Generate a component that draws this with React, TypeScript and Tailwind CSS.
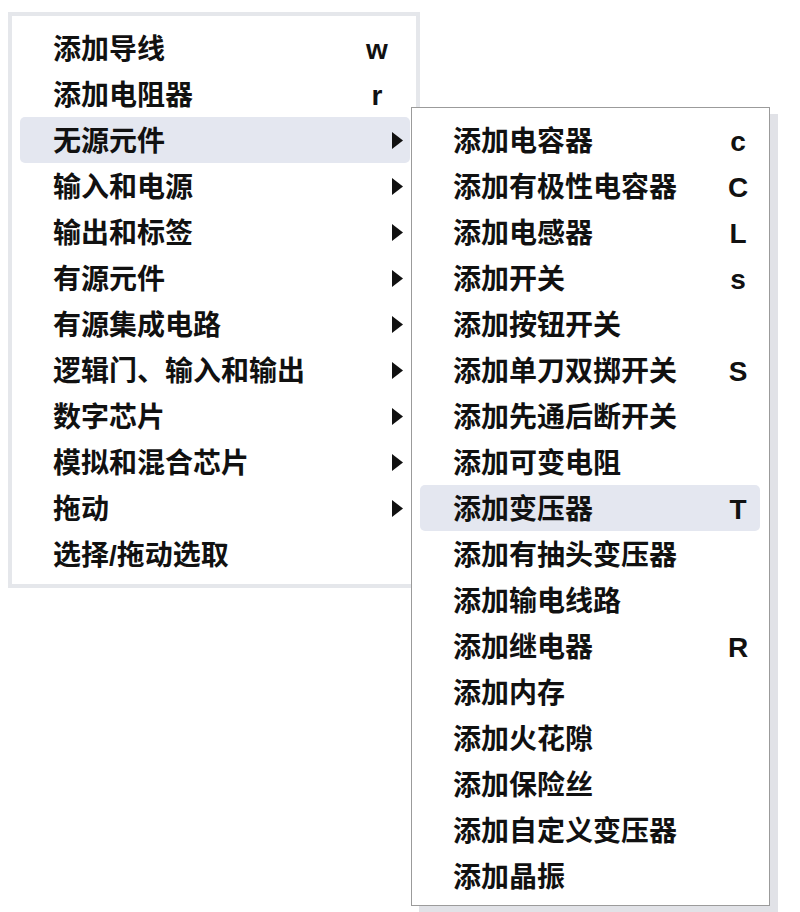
import React from 'react';

type Item = { label: string; key?: string; sub?: boolean; active?: boolean };

const mainItems: Item[] = [
  { label: '添加导线', key: 'w' },
  { label: '添加电阻器', key: 'r' },
  { label: '无源元件', sub: true, active: true },
  { label: '输入和电源', sub: true },
  { label: '输出和标签', sub: true },
  { label: '有源元件', sub: true },
  { label: '有源集成电路', sub: true },
  { label: '逻辑门、输入和输出', sub: true },
  { label: '数字芯片', sub: true },
  { label: '模拟和混合芯片', sub: true },
  { label: '拖动', sub: true },
  { label: '选择/拖动选取' },
];

const subItems: Item[] = [
  { label: '添加电容器', key: 'c' },
  { label: '添加有极性电容器', key: 'C' },
  { label: '添加电感器', key: 'L' },
  { label: '添加开关', key: 's' },
  { label: '添加按钮开关' },
  { label: '添加单刀双掷开关', key: 'S' },
  { label: '添加先通后断开关' },
  { label: '添加可变电阻' },
  { label: '添加变压器', key: 'T', active: true },
  { label: '添加有抽头变压器' },
  { label: '添加输电线路' },
  { label: '添加继电器', key: 'R' },
  { label: '添加内存' },
  { label: '添加火花隙' },
  { label: '添加保险丝' },
  { label: '添加自定义变压器' },
  { label: '添加晶振' },
];

const font = { fontFamily: '"Liberation Sans", "Noto Sans CJK SC", sans-serif' };

const Arrow = () => (
  <svg width="11" height="17" viewBox="0 0 11 17" className="mr-[7px] shrink-0">
    <path d="M0 0 L11 8.5 L0 17 Z" fill="#111" />
  </svg>
);

const Row: React.FC<{ item: Item; keyMargin: string }> = ({ item, keyMargin }) => (
  <div
    className={`h-[46px] flex items-center rounded-[5px] pl-[33px] ${item.active ? 'bg-[#e4e7f0]' : ''}`}
  >
    <span className="flex-1 whitespace-nowrap pt-[3px]">{item.label}</span>
    {item.key && <span className={`w-[30px] text-center pt-[3px] ${keyMargin}`}>{item.key}</span>}
    {item.sub && <Arrow />}
  </div>
);

export default function App() {
  return (
    <div
      className="relative w-[800px] h-[912px] bg-white overflow-hidden text-[28px] font-bold text-[#111] leading-none"
      style={font}
    >
      <div className="ml-[8px] mt-[12px] w-[412px] border-4 border-[#e5e7eb] bg-white pt-[9px] pb-[7px]">
        <div className="ml-[8px] mr-[6px]">
          {mainItems.map((it) => (
            <Row key={it.label} item={it} keyMargin="mr-[18px]" />
          ))}
        </div>
      </div>

      <div className="absolute left-[411px] top-[107px] w-[359px] border border-[#9b9b9b] bg-white pt-[9px] pb-[6px] shadow-[8px_7px_0_0_#e1e2e7]">
        <div className="ml-[8px] mr-[9px]">
          {subItems.map((it) => (
            <Row key={it.label} item={it} keyMargin="mr-[7px]" />
          ))}
        </div>
      </div>
    </div>
  );
}
